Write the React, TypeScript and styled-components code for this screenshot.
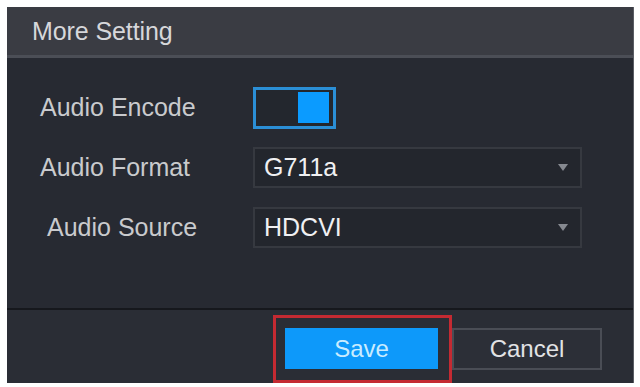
import styled, { createGlobalStyle } from 'styled-components'

const GlobalStyle = createGlobalStyle`
  html, body {
    margin: 0;
    padding: 0;
    background: #ffffff;
  }
  body {
    font-family: "Liberation Sans", Arial, sans-serif;
  }
`

type Field = {
  label: string
  value: string
  indent?: number
}

const fields: Field[] = [
  { label: 'Audio Format', value: 'G711a' },
  { label: 'Audio Source', value: 'HDCVI', indent: 7 }
]

const App = () => {
  return (
    <>
      <GlobalStyle />
      <Page>
        <Panel>
          <Header>
            <Title>More Setting</Title>
          </Header>

          <Body>
            <Row>
              <Label>Audio Encode</Label>
              <Toggle>
                <Knob />
              </Toggle>
            </Row>

            {fields.map((field) => (
              <Row key={field.label}>
                <Label $indent={field.indent}>{field.label}</Label>
                <Select>
                  <SelectValue>{field.value}</SelectValue>
                  <Arrow />
                </Select>
              </Row>
            ))}
          </Body>

          <Footer>
            <Highlight>
              <SaveButton>Save</SaveButton>
            </Highlight>
            <CancelButton>Cancel</CancelButton>
          </Footer>
        </Panel>
      </Page>
    </>
  )
}

const Page = styled.div`
  width: 640px;
  height: 387px;
  padding: 7px 6px 4px 7px;
  box-sizing: border-box;
`

const Panel = styled.div`
  width: 627px;
  height: 376px;
  display: flex;
  flex-direction: column;
  background: #272a32;
  border-right: 1px solid #5a5d64;
  box-sizing: border-box;
`

const Header = styled.div`
  height: 51px;
  display: flex;
  align-items: center;
  padding-left: 25px;
  background: #3a3c43;
  border-bottom: 3px solid #4b4e56;
  box-sizing: border-box;
`

const Title = styled.h3`
  margin: 0;
  font-size: 25px;
  font-weight: normal;
  letter-spacing: -0.1px;
  color: #d6d7da;
`

const Body = styled.div`
  flex: 1;
  display: flex;
  flex-direction: column;
  gap: 19px;
  padding: 29px 0 0 33px;
  background: #272a32;
  border-bottom: 2px solid #16181d;
`

const Row = styled.div`
  display: flex;
  align-items: center;
  height: 41px;
`

const Label = styled.span<{ $indent?: number }>`
  width: 213px;
  padding-left: ${({ $indent }) => $indent ?? 0}px;
  box-sizing: border-box;
  font-size: 25px;
  color: #c9cacd;
`

const Toggle = styled.div`
  width: 83px;
  height: 42px;
  display: flex;
  justify-content: flex-end;
  align-items: center;
  padding-right: 4px;
  box-sizing: border-box;
  background: #23272e;
  border: 3px solid #2b8fd6;
`

const Knob = styled.div`
  width: 31px;
  height: 31px;
  background: #0b9bff;
`

const Select = styled.div`
  width: 329px;
  height: 41px;
  display: flex;
  align-items: center;
  justify-content: space-between;
  padding: 0 12px 0 9px;
  box-sizing: border-box;
  background: #23262d;
  border: 2px solid #363940;
`

const SelectValue = styled.span`
  font-size: 25px;
  color: #f0f0f2;
`

const Arrow = styled.span`
  width: 0;
  height: 0;
  border-left: 5px solid transparent;
  border-right: 5px solid transparent;
  border-top: 7px solid #868990;
`

const Footer = styled.div`
  height: 73px;
  display: flex;
  justify-content: flex-end;
  align-items: flex-start;
  padding: 5px 31px 0 0;
  box-sizing: border-box;
  background: #2a2d35;
`

const Highlight = styled.div`
  width: 179px;
  height: 68px;
  padding: 10px 11px 0 9px;
  box-sizing: border-box;
  border: 3px solid #c42a32;
`

const SaveButton = styled.button`
  width: 153px;
  height: 41px;
  border: none;
  padding: 0;
  background: #0d99fa;
  font-family: "Liberation Sans", Arial, sans-serif;
  font-size: 24px;
  color: #c9ecff;
`

const CancelButton = styled.button`
  width: 150px;
  height: 42px;
  margin-top: 13px;
  padding: 0;
  background: #2c2f37;
  border: 2px solid #4a4d55;
  font-family: "Liberation Sans", Arial, sans-serif;
  font-size: 24px;
  color: #e2e3e5;
`

export default App
